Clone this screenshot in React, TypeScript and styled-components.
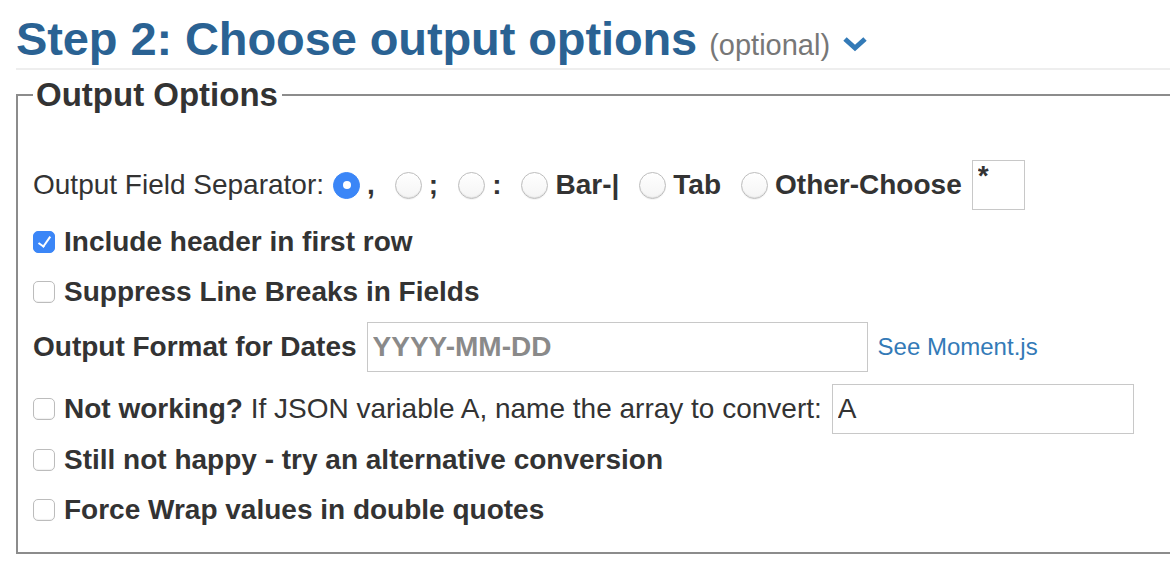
import React, { FC, useState } from 'react';
import styled, { createGlobalStyle } from 'styled-components';

const color = {
    heading: '#2a6293',
    link: '#337ab7',
    text: '#333333',
    muted: '#777777',
    rule: '#eeeeee',
    frame: '#8c8c8c',
    field: '#c8c8c8',
    accent: '#3b86f7',
};

const GlobalStyle = createGlobalStyle`
    html, body {
        margin: 0;
        padding: 0;
        background: #ffffff;
        overflow: hidden;
    }
    body {
        font-family: "Liberation Sans", Arial, sans-serif;
        color: ${color.text};
    }
`;

const Page = styled.div`
    width: 1200px;
    padding: 0 0 0 16px;
    box-sizing: border-box;
`;

const StepHeader = styled.div`
    display: flex;
    align-items: baseline;
    gap: 12px;
    height: 70px;
    padding-top: 15px;
    box-sizing: border-box;
    border-bottom: 2px solid ${color.rule};
`;

const StepTitle = styled.h1`
    margin: 0;
    font-size: 47px;
    font-weight: 700;
    line-height: 1;
    color: ${color.heading};
    letter-spacing: -0.1px;
`;

const StepHint = styled.span`
    font-size: 29px;
    color: ${color.muted};
`;

const Chevron = styled.svg`
    width: 26px;
    height: 18px;
    align-self: center;
    margin-left: 0;
    margin-top: 4px;
`;

const Options = styled.fieldset`
    margin: 8px 0 0;
    padding: 48px 0 17px 15px;
    border: 2px solid ${color.frame};
    border-right: none;
    min-width: 0;
`;

const Legend = styled.legend`
    padding: 0 4px 0 3px;
    font-size: 33px;
    font-weight: 700;
    line-height: 34px;
    color: ${color.text};
`;

const Row = styled.div<{ $top?: number }>`
    display: flex;
    align-items: center;
    height: 50px;
    margin-top: ${(p) => p.$top ?? 0}px;
    font-size: 28px;
    white-space: nowrap;
`;

const Label = styled.span<{ $bold?: boolean }>`
    font-weight: ${(p) => (p.$bold ? 700 : 400)};
`;

const RadioGroup = styled.div`
    display: flex;
    align-items: center;
    margin-left: 9px;
`;

const RadioOption = styled.label`
    display: flex;
    align-items: center;
    gap: 7px;
    margin-right: 20px;
    font-weight: 700;
    cursor: pointer;
`;

const Radio = styled.input.attrs({ type: 'radio' })`
    appearance: none;
    margin: 0;
    width: 27px;
    height: 27px;
    border-radius: 50%;
    border: 1px solid #bdbdbd;
    background: linear-gradient(#ffffff, #f4f4f4);
    box-shadow: inset 0 -1px 1px rgba(0, 0, 0, 0.08), 0 1px 0 rgba(0, 0, 0, 0.04);
    box-sizing: border-box;
    display: grid;
    place-items: center;
    &:checked {
        border-color: ${color.accent};
        background: ${color.accent};
        box-shadow: none;
    }
    &:checked::after {
        content: '';
        width: 8px;
        height: 8px;
        border-radius: 50%;
        background: #ffffff;
    }
`;

const CheckOption = styled.label`
    display: flex;
    align-items: center;
    gap: 9px;
    font-weight: 700;
    cursor: pointer;
`;

const Check = styled.input.attrs({ type: 'checkbox' })`
    appearance: none;
    margin: 0;
    width: 22px;
    height: 22px;
    border-radius: 5px;
    border: 1px solid #bcbcbc;
    background: #ffffff;
    box-shadow: inset 0 -1px 1px rgba(0, 0, 0, 0.06);
    box-sizing: border-box;
    display: grid;
    place-items: center;
    &:checked {
        border-color: ${color.accent};
        background: ${color.accent};
        box-shadow: none;
    }
    &:checked::after {
        content: '';
        width: 5px;
        height: 11px;
        margin-top: -3px;
        border: solid #ffffff;
        border-width: 0 2px 2px 0;
        transform: rotate(35deg);
    }
`;

const TextBox = styled.input<{ $width: number; $bold?: boolean; $gap?: number }>`
    width: ${(p) => p.$width}px;
    height: 50px;
    box-sizing: border-box;
    margin: 0 0 0 ${(p) => p.$gap ?? 10}px;
    padding: 4px 5px;
    border: 1px solid ${color.field};
    font-family: inherit;
    font-size: 28px;
    font-weight: ${(p) => (p.$bold ? 700 : 400)};
    color: ${color.text};
    outline: none;
    &::placeholder {
        color: #8a8a8a;
    }
`;

const StarBox = styled(TextBox)`
    padding-top: 0;
    padding-bottom: 18px;
    font-weight: 700;
`;

const Link = styled.a`
    margin-left: 10px;
    font-size: 24px;
    color: ${color.link};
    text-decoration: none;
`;

const separators = [
    { id: 'comma', label: ',' },
    { id: 'semi', label: ';' },
    { id: 'colon', label: ':' },
    { id: 'bar', label: 'Bar-|' },
    { id: 'tab', label: 'Tab' },
    { id: 'other', label: 'Other-Choose' },
];

const App: FC = () => {
    const [sep, setSep] = useState<string>('comma');
    const [header, setHeader] = useState<boolean>(true);

    return (
        <>
            <GlobalStyle />
            <Page>
                <StepHeader>
                    <StepTitle>Step 2: Choose output options</StepTitle>
                    <StepHint>(optional)</StepHint>
                    <Chevron viewBox="0 0 26 18">
                        <path d="M3 4 L13 13 L23 4" fill="none" stroke={color.link} strokeWidth="5" />
                    </Chevron>
                </StepHeader>

                <Options>
                    <Legend>Output Options</Legend>

                    <Row>
                        <Label>Output Field Separator:</Label>
                        <RadioGroup>
                            {separators.map((s) => (
                                <RadioOption key={s.id}>
                                    <Radio name="sep" checked={sep === s.id} onChange={() => setSep(s.id)} />
                                    {s.label}
                                </RadioOption>
                            ))}
                        </RadioGroup>
                        <StarBox $width={53} $gap={-10} defaultValue="*" />
                    </Row>

                    <Row $top={7}>
                        <CheckOption>
                            <Check checked={header} onChange={() => setHeader((v) => !v)} />
                            Include header in first row
                        </CheckOption>
                    </Row>

                    <Row>
                        <CheckOption>
                            <Check />
                            Suppress Line Breaks in Fields
                        </CheckOption>
                    </Row>

                    <Row $top={5}>
                        <Label $bold>Output Format for Dates</Label>
                        <TextBox $width={501} $bold placeholder="YYYY-MM-DD" />
                        <Link href="#">See Moment.js</Link>
                    </Row>

                    <Row $top={12}>
                        <CheckOption>
                            <Check />
                            <span>
                                Not working? <Label>If JSON variable A, name the array to convert:</Label>
                            </span>
                        </CheckOption>
                        <TextBox $width={302} defaultValue="A" />
                    </Row>

                    <Row $top={1}>
                        <CheckOption>
                            <Check />
                            Still not happy - try an alternative conversion
                        </CheckOption>
                    </Row>

                    <Row>
                        <CheckOption>
                            <Check />
                            Force Wrap values in double quotes
                        </CheckOption>
                    </Row>
                </Options>
            </Page>
        </>
    );
};

export default App;
